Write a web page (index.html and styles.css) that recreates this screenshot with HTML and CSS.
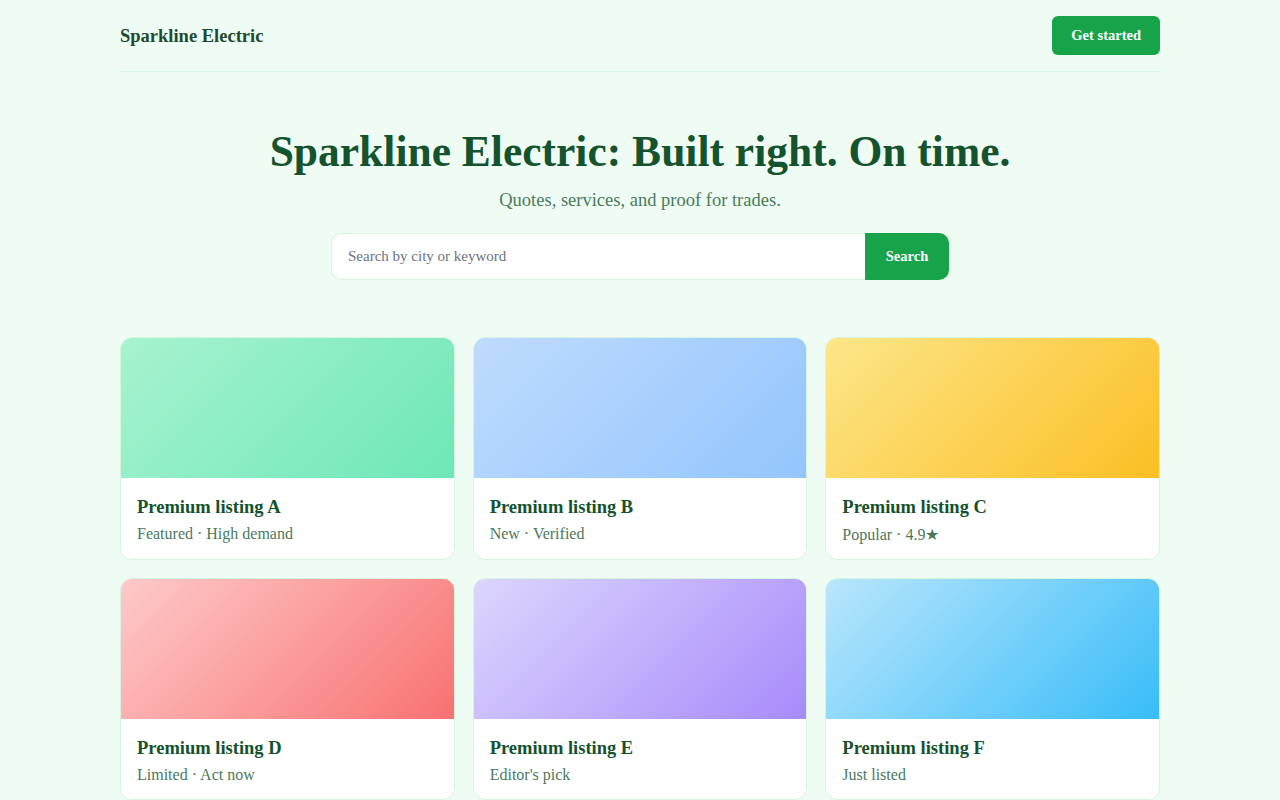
FILE: index.html
```html
<!DOCTYPE html>
<html lang="en">
    <head>
        <meta charset="UTF-8">
        <meta name="viewport" content="width=device-width, initial-scale=1.0">
        <title>Sparkline Electric</title>
        <link rel="stylesheet" href="styles.css">
    </head>
<body>
    <div class="container">
        <header class="topbar">
            <div class="brand">Sparkline Electric</div>
            <a href="#" class="cta-button">Get started</a>
        </header>

        <section class="hero">
            <h1>Sparkline Electric: Built right. On time.</h1>
            <p class="subtitle">Quotes, services, and proof for trades.</p>
            <form class="search-form">
                <input type="text" placeholder="Search by city or keyword">
                <button type="submit">Search</button>
            </form>
        </section>

        <section class="listings">
            <div class="card">
                <div class="card-image grad-a"></div>
                <div class="card-body">
                    <h3>Premium listing A</h3>
                    <p class="meta">Featured · High demand</p>
                </div>
            </div>
            <div class="card">
                <div class="card-image grad-b"></div>
                <div class="card-body">
                    <h3>Premium listing B</h3>
                    <p class="meta">New · Verified</p>
                </div>
            </div>
            <div class="card">
                <div class="card-image grad-c"></div>
                <div class="card-body">
                    <h3>Premium listing C</h3>
                    <p class="meta">Popular · 4.9★</p>
                </div>
            </div>
            <div class="card">
                <div class="card-image grad-d"></div>
                <div class="card-body">
                    <h3>Premium listing D</h3>
                    <p class="meta">Limited · Act now</p>
                </div>
            </div>
            <div class="card">
                <div class="card-image grad-e"></div>
                <div class="card-body">
                    <h3>Premium listing E</h3>
                    <p class="meta">Editor's pick</p>
                </div>
            </div>
            <div class="card">
                <div class="card-image grad-f"></div>
                <div class="card-body">
                    <h3>Premium listing F</h3>
                    <p class="meta">Just listed</p>
                </div>
            </div>
        </section>
    </div>
</body>
</html>
```

FILE: styles.css
```css
* {
    margin: 0;
    padding: 0;
    box-sizing: border-box;
    font-family: 'Liberation Serif', 'DejaVu Serif', serif;
}

body {
    background-color: #effcf3;
    color: #14532d;
}

.container {
    max-width: 1040px;
    margin: 0 auto;
}

.topbar {
    height: 72px;
    display: flex;
    align-items: center;
    justify-content: space-between;
    border-bottom: 1px solid #d6f5e0;
}

.brand {
    font-size: 18.5px;
    font-weight: 700;
    color: #1d4b30;
    padding-top: 1px;
}

.cta-button {
    background-color: #16a34a;
    color: white;
    text-decoration: none;
    font-size: 14.5px;
    font-weight: 700;
    padding: 11px 19px;
    border-radius: 6px;
}

.hero {
    padding: 53px 0 57px;
    display: flex;
    flex-direction: column;
    align-items: center;
}

h1 {
    font-size: 43.5px;
    font-weight: 700;
    color: #14532d;
    line-height: 1.2;
}

.subtitle {
    font-size: 18.5px;
    color: #4b7a5b;
    margin-top: 13px;
}

.search-form {
    display: flex;
    width: 618px;
    margin-top: 22px;
    height: 47px;
}

.search-form input {
    flex: 1;
    border: 1px solid #d6f5e0;
    border-right: none;
    border-radius: 10px 0 0 10px;
    padding: 0 16px;
    font-size: 15px;
    outline: none;
    background: white;
}

.search-form input::placeholder {
    color: #6b7280;
}

.search-form button {
    width: 84px;
    background-color: #16a34a;
    color: white;
    border: none;
    border-radius: 0 10px 10px 0;
    font-size: 14.5px;
    font-weight: 700;
    cursor: pointer;
}

.listings {
    display: grid;
    grid-template-columns: repeat(3, 1fr);
    gap: 18px;
}

.card {
    background: white;
    border: 1px solid #d6f5e0;
    border-radius: 12px;
    overflow: hidden;
}

.card-image {
    height: 140px;
}

.grad-a { background: linear-gradient(135deg, #a7f3d0, #6ee7b7); }
.grad-b { background: linear-gradient(135deg, #bfdbfe, #93c5fd); }
.grad-c { background: linear-gradient(135deg, #fde68a, #fbbf24); }
.grad-d { background: linear-gradient(135deg, #fecaca, #f87171); }
.grad-e { background: linear-gradient(135deg, #ddd6fe, #a78bfa); }
.grad-f { background: linear-gradient(135deg, #bae6fd, #38bdf8); }

.card-body {
    padding: 19px 16px 15px;
}

.card-body h3 {
    font-size: 18.5px;
    font-weight: 700;
    color: #14532d;
}

.meta {
    font-size: 16px;
    color: #4b7a5b;
    margin-top: 7px;
}
```
